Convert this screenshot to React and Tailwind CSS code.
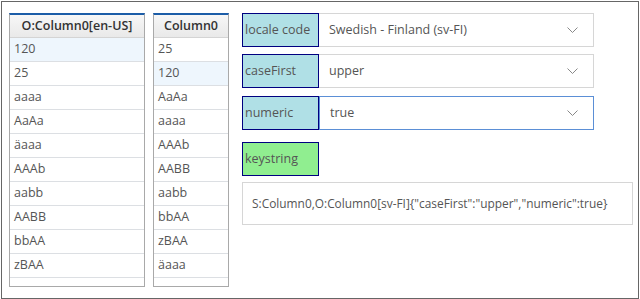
import React from 'react';

const left = ['120', '25', 'aaaa', 'AaAa', 'äaaa', 'AAAb', 'aabb', 'AABB', 'bbAA', 'zBAA'];
const right = ['25', '120', 'AaAa', 'aaaa', 'AAAb', 'AABB', 'aabb', 'bbAA', 'zBAA', 'äaaa'];

const font = { fontFamily: '"Open Sans", "Noto Sans", sans-serif' };

const Grid = ({ title, rows, selected, width }) => (
    <div className={`${width} border border-[#a9a9a9] border-t-2 border-t-[#1c5da8] bg-white`}>
        <div className="h-[23px] flex items-center justify-center bg-gradient-to-b from-[#f7f7f7] to-[#e9e9e9] border-b border-[#d4d4d4] text-[12.5px] font-semibold text-[#333]">
            {title}
        </div>
        {rows.map((r, i) => (
            <div
                key={i}
                className={`h-[24px] flex items-center pl-[4px] border-b border-[#dcdfe3] text-[12.5px] text-[#555] ${i === selected ? 'bg-[#eef6fd]' : ''}`}
            >
                {r}
            </div>
        ))}
        <div className="h-[8px]" />
    </div>
);

const Chevron = () => (
    <svg width="11" height="7" viewBox="0 0 11 7" className="text-[#888]">
        <path d="M0.5 0.5 L5.5 5.5 L10.5 0.5" fill="none" stroke="currentColor" strokeWidth="1" />
    </svg>
);

const Field = ({ label, value, focused, className = '' }) => (
    <div className={`flex h-[34px] ${className}`}>
        <div className="w-[77px] border border-[#000080] bg-[#b0e0e6] flex items-center pl-[2px] text-[12.5px] text-[#555]">
            {label}
        </div>
        <div className={`w-[275px] flex items-center justify-between pl-[10px] pr-[15px] border text-[12.5px] text-[#555] ${focused ? 'border-[#5b8fd6] border-l-[#5b8fd6]' : 'border-[#d6d6d6] border-l-0'}`}>
            <span>{value}</span>
            <Chevron />
        </div>
    </div>
);

export default function App() {
    return (
        <div className="p-px bg-white" style={font}>
            <div className="h-[298px] border border-[#666] flex items-start pl-[7px] pt-[11px]">
                <Grid title="O:Column0[en-US]" rows={left} selected={0} width="w-[136px]" />
                <div className="w-[8px]" />
                <Grid title="Column0" rows={right} selected={1} width="w-[76px]" />
                <div className="ml-[13px] flex flex-col">
                    <Field label="locale code" value="Swedish - Finland (sv-FI)" />
                    <Field label="caseFirst" value="upper" className="mt-[7px]" />
                    <Field label="numeric" value="true" focused className="mt-[8px]" />
                    <div className="mt-[12px] w-[77px] h-[34px] border border-[#000080] bg-[#90ee90] flex items-center pl-[2px] text-[12.5px] text-[#555]">
                        keystring
                    </div>
                    <div className="mt-[6px] w-[391px] h-[43px] border border-[#d6d6d6] flex items-center pl-[9px] text-[11.9px] text-[#555]">
                        S:Column0,O:Column0[sv-FI]{'{'}"caseFirst":"upper","numeric":true{'}'}
                    </div>
                </div>
            </div>
        </div>
    );
}
